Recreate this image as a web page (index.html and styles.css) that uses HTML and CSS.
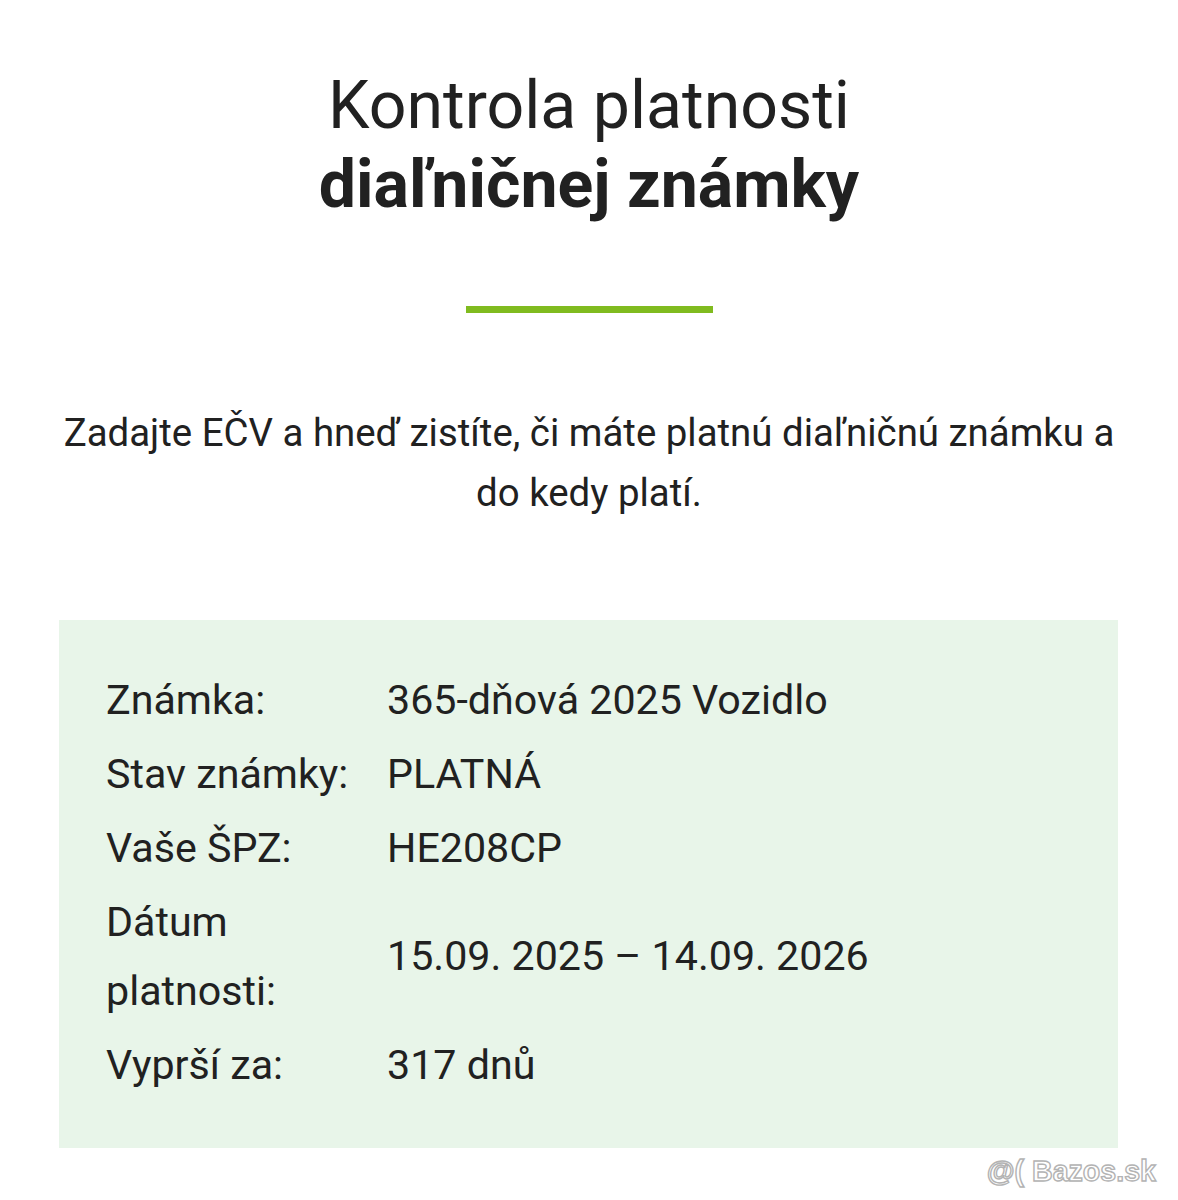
FILE: index.html
```html
<!DOCTYPE html>
<html lang="sk">
<head>
<meta charset="utf-8">
<title>Kontrola platnosti diaľničnej známky</title>
<link rel="stylesheet" href="styles.css">
</head>
<body>
<main class="page">
  <h1 class="title">
    <span class="title-light">Kontrola platnosti</span>
    <span class="title-bold">diaľničnej známky</span>
  </h1>
  <div class="divider"></div>
  <p class="lead">Zadajte EČV a hneď zistíte, či máte platnú diaľničnú známku a do kedy platí.</p>
  <section class="result">
    <dl class="result-grid">
      <dt class="label">Známka:</dt>
      <dd class="value">365-dňová 2025 Vozidlo</dd>
      <dt class="label">Stav známky:</dt>
      <dd class="value">PLATNÁ</dd>
      <dt class="label">Vaše ŠPZ:</dt>
      <dd class="value">HE208CP</dd>
      <dt class="label">Dátum platnosti:</dt>
      <dd class="value">15.09. 2025 – 14.09. 2026</dd>
      <dt class="label">Vyprší za:</dt>
      <dd class="value">317 dnů</dd>
    </dl>
  </section>
</main>
<div class="watermark">@( Bazos.sk</div>
</body>
</html>
```

FILE: styles.css
```css
html, body {
  margin: 0;
  padding: 0;
  background: #ffffff;
}

body {
  position: relative;
  min-height: 1200px;
  font-family: Roboto, "Noto Sans", Arial, sans-serif;
  color: #212121;
}

.page {
  display: flex;
  flex-direction: column;
  align-items: center;
  padding-top: 66px;
}

.title {
  margin: 0;
  display: flex;
  flex-direction: column;
  align-items: center;
  font-size: 66.2px;
  line-height: 79px;
  color: #212121;
  text-align: center;
}

.title-light {
  font-weight: 400;
}

.title-bold {
  font-weight: 700;
}

.divider {
  margin-top: 82px;
  width: 247px;
  height: 7px;
  background: #80bb1f;
}

.lead {
  box-sizing: border-box;
  width: 100%;
  margin: 90px 0 0;
  padding: 0 50px;
  font-size: 38.4px;
  line-height: 60px;
  text-align: center;
  color: #212121;
}

.result {
  box-sizing: border-box;
  width: 1059px;
  margin: 97px 0 0 -1px;
  padding: 43px 47px 46px;
  background: #e8f5e9;
}

.result-grid {
  margin: 0;
  display: grid;
  grid-template-columns: 281px 1fr;
  align-items: center;
  font-size: 41.2px;
  line-height: 69px;
  color: #212121;
}

.label,
.value {
  margin: 0;
  padding: 2.5px 0;
}

.label {
  padding-right: 24px;
}

.watermark {
  position: absolute;
  top: 1156px;
  right: 22px;
  font-family: "Liberation Sans", Arial, sans-serif;
  font-size: 28.6px;
  font-weight: 700;
  line-height: 30px;
  color: #ffffff;
  -webkit-text-stroke: 1.4px #b3b3b3;
  white-space: nowrap;
}
```
